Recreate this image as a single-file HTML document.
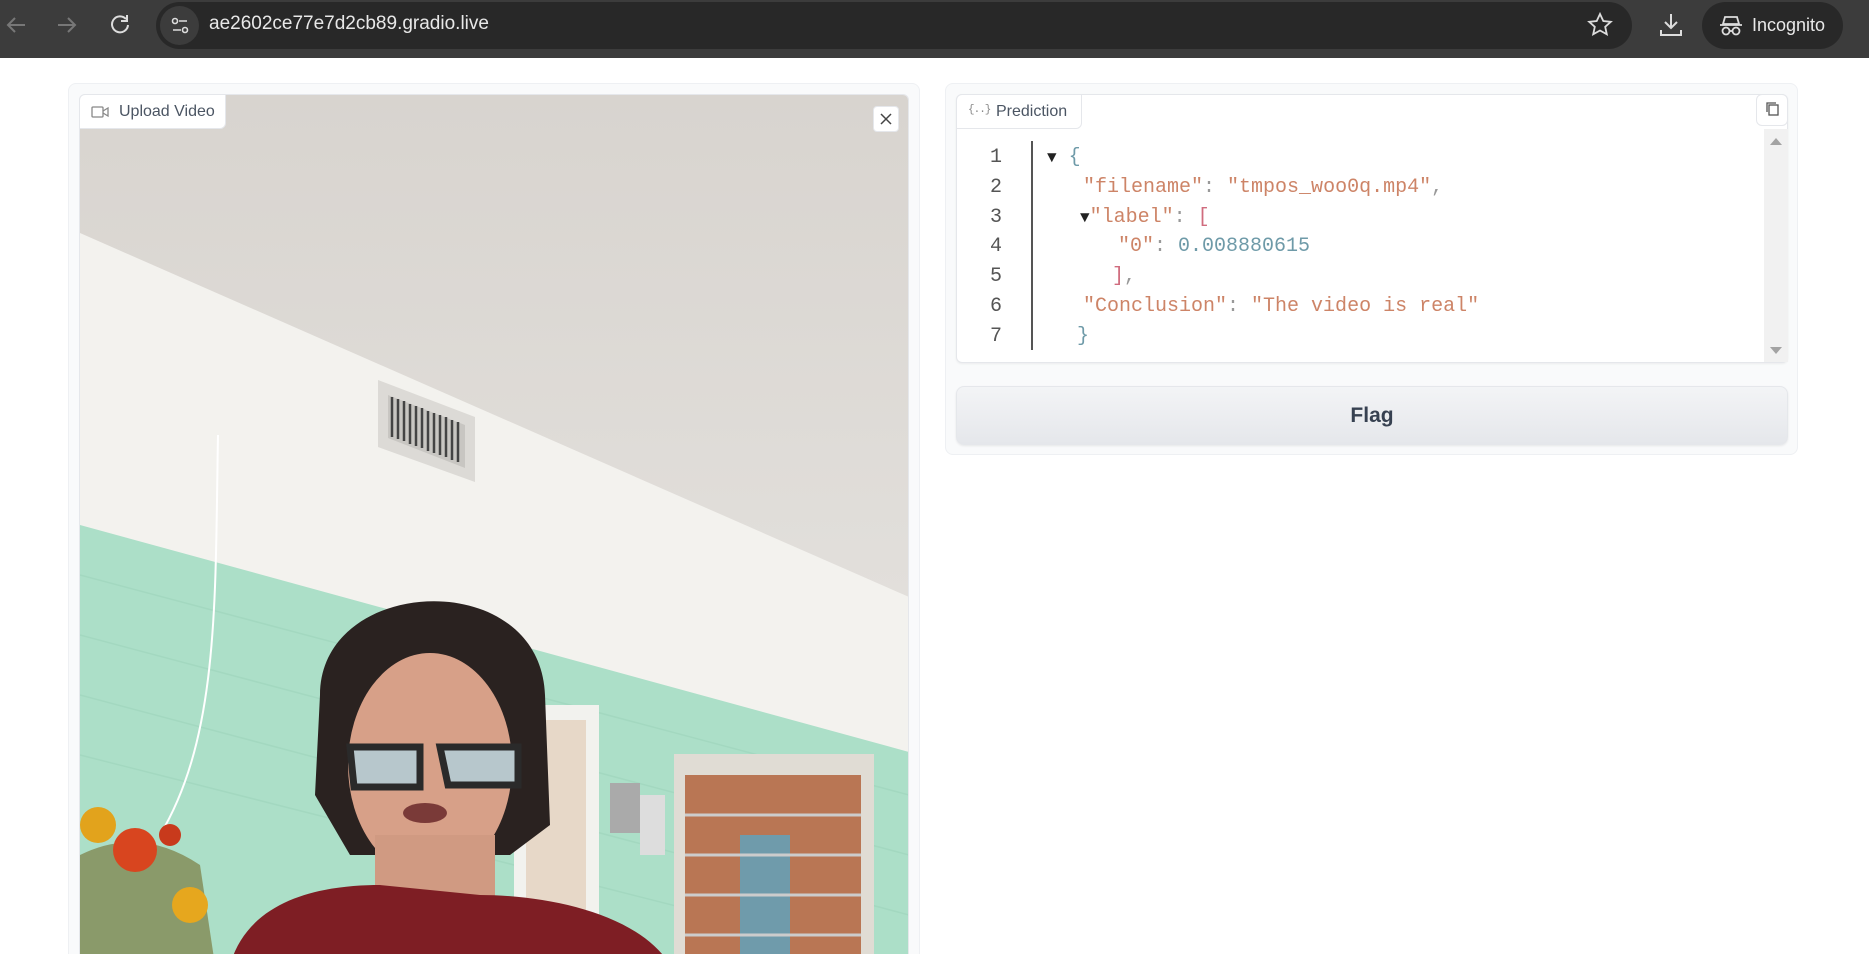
<!DOCTYPE html>
<html style="overflow:hidden;height:954px"><head><meta charset="utf-8"><style>
*{box-sizing:border-box;margin:0;padding:0}
body{width:1869px;height:954px;overflow:hidden;background:#fff;font-family:"Liberation Sans",sans-serif;position:relative}
.bar{position:absolute;left:0;top:0;width:1869px;height:58px;background:#3c3c3c}
.omni{position:absolute;left:156px;top:2px;width:1476px;height:47px;border-radius:24px;background:#282828}
.url{position:absolute;left:209px;top:13px;color:#e8e8e8;font-size:19px}
.incog{position:absolute;left:1702px;top:2px;width:141px;height:47px;border-radius:24px;background:#282828;color:#e8e8e8;font-size:18px;line-height:47px;padding-left:50px}
.panel{position:absolute;background:#f9fafb;border:1px solid #eef0f3;border-radius:8px}
.mono{font-family:"Liberation Mono",monospace;font-size:20px;position:absolute;white-space:pre}
.ln{color:#555;left:990px}
.s{color:#cd8467}.n{color:#6e9aa8}.p{color:#999}.b{color:#d06c7e}
</style></head><body>
<div class="bar">
 <svg width="140" height="58" style="position:absolute;left:0;top:0" fill="none" stroke-width="2">
  <path d="M25 25H8M15 18l-7 7 7 7" stroke="#777"/>
  <path d="M58 25h17M68 18l7 7-7 7" stroke="#777"/>
  <path d="M126 19a8 8 0 1 0 2 6M127 15v6h-6" stroke="#ddd"/>
 </svg>
 <div class="omni"><div style="position:absolute;left:4px;top:4px;width:39px;height:39px;border-radius:50%;background:#3c3c3c"></div>
 <svg width="20" height="20" style="position:absolute;left:14px;top:14px" stroke="#ddd" fill="none" stroke-width="1.6"><circle cx="5" cy="5" r="2.5"/><path d="M9 5h8M3 14h8"/><circle cx="15" cy="14" r="2.5"/></svg></div>
 <div class="url">ae2602ce77e7d2cb89.gradio.live</div>
 <svg width="30" height="30" style="position:absolute;left:1585px;top:10px" fill="none" stroke="#ddd" stroke-width="1.8"><path d="M15 4l3.3 7 7.5.8-5.6 5 1.6 7.5L15 20.5l-6.8 3.8 1.6-7.5-5.6-5 7.5-.8z"/></svg>
 <svg width="30" height="30" style="position:absolute;left:1656px;top:10px" fill="none" stroke="#ddd" stroke-width="2"><path d="M15 4v14M9 12l6 6 6-6M5 20v5h20v-5"/></svg>
 <div class="incog">Incognito</div>
 <svg width="26" height="24" style="position:absolute;left:1718px;top:14px" fill="none" stroke="#ddd" stroke-width="1.8"><path d="M7 3h12l2 7H5zM2 11h22"/><circle cx="8" cy="17" r="3.5"/><circle cx="18" cy="17" r="3.5"/><path d="M11.5 17h3"/></svg>
</div>

<div class="panel" style="left:68px;top:83px;width:852px;height:880px"></div>
<div style="position:absolute;left:79px;top:94px;width:830px;height:870px;overflow:hidden;border-radius:6px 6px 0 0;border:1px solid #e5e7eb">
<svg width="830" height="870" viewBox="0 0 830 870">
 <defs><linearGradient id="c" x1="0" y1="0" x2="0" y2="1"><stop offset="0" stop-color="#d8d4cf"/><stop offset="1" stop-color="#e9e7e4"/></linearGradient></defs>
 <rect width="830" height="870" fill="url(#c)"/>
 <polygon points="0,138 829,502 829,870 0,870" fill="#f3f2ee"/>
 <polygon points="0,430 829,657 829,870 0,870" fill="#acdfc8"/>
 <path d="M0 480L829 700M0 540L829 760M0 600L829 820M0 660L829 870" stroke="#a3d8c0" stroke-width="1.5"/>
 <polygon points="298,285 395,322 395,387 298,352" fill="#dcdad6"/>
 <polygon points="308,300 385,330 385,373 308,343" fill="#c8c6c2"/>
 <path d="M312 302v40M318 304v40M324 306v40M330 309v40M336 311v40M342 313v40M348 316v40M354 318v40M360 320v40M366 322v40M372 325v40M378 327v40" stroke="#444" stroke-width="2.5"/>
 <path d="M138 340 C135 500 140 640 80 740" stroke="#fff" stroke-width="2" fill="none"/>
 <rect x="434" y="610" width="85" height="260" fill="#f2f2ee"/>
 <rect x="446" y="625" width="60" height="245" fill="#e7d8c8"/>
 <rect x="594" y="659" width="200" height="211" fill="#e0dcd4"/>
 <rect x="605" y="680" width="176" height="190" fill="#b97654"/>
 <rect x="660" y="740" width="50" height="130" fill="#6f9bab"/>
 <path d="M605 720h176M605 760h176M605 800h176M605 840h176" stroke="#ccc" stroke-width="3"/>
 <rect x="530" y="688" width="30" height="50" fill="#aaa"/><rect x="560" y="700" width="25" height="60" fill="#ddd"/>
 <path d="M0 760 Q60 730 120 770 L135 870 L0 870Z" fill="#8a9a6a"/>
 <circle cx="18" cy="730" r="18" fill="#e2a31c"/><circle cx="55" cy="755" r="22" fill="#d8451f"/><circle cx="110" cy="810" r="18" fill="#e6a71e"/><circle cx="90" cy="740" r="11" fill="#c83a1c"/>
 <path d="M240 600 C240 480 460 470 465 600 L470 730 L430 760 L270 760 L235 700Z" fill="#2a2220"/>
 <ellipse cx="350" cy="670" rx="82" ry="112" fill="#d7a088"/>
 <rect x="295" y="740" width="120" height="90" fill="#d09a82"/>
 <path d="M270 652 h70 v40 h-66z M360 652 h78 v38 h-70z" fill="#b7c7cc" stroke="#2a2a2a" stroke-width="7"/>
 <ellipse cx="345" cy="718" rx="22" ry="10" fill="#7a3a38"/>
 <path d="M150 870 C170 800 250 790 300 790 L400 800 C470 800 560 820 590 870Z" fill="#7e1e24"/>
</svg></div>
<div style="position:absolute;left:79px;top:94px;width:147px;height:35px;background:#fff;border-radius:6px 0 6px 0;border:1px solid #e5e7eb;color:#4b5563;font-size:16px;line-height:33px;padding-left:39px">Upload Video</div>
<svg width="18" height="14" style="position:absolute;left:91px;top:105px" fill="none" stroke="#888" stroke-width="1.3"><rect x="1" y="2" width="11" height="10" rx="1"/><path d="M12 6l5-3v8l-5-3"/></svg>
<div style="position:absolute;left:873px;top:106px;width:26px;height:26px;background:#fff;border-radius:4px;border:1px solid #e5e7eb"></div>
<svg width="14" height="14" style="position:absolute;left:879px;top:112px" stroke="#444" stroke-width="1.5"><path d="M2 2l10 10M12 2L2 12"/></svg>

<div class="panel" style="left:945px;top:83px;width:853px;height:372px"></div>
<div style="position:absolute;left:956px;top:94px;width:832px;height:269px;background:#fff;border:1px solid #e5e7eb;border-radius:6px;box-shadow:0 1px 2px rgba(0,0,0,.06)"></div>
<div style="position:absolute;left:956px;top:94px;width:126px;height:35px;background:#fff;border-radius:6px 0 6px 0;border:1px solid #e5e7eb;color:#4b5563;font-size:16px;line-height:33px;padding-left:39px">Prediction</div>
<div style="position:absolute;left:968px;top:104px;font-size:11px;color:#888;font-family:'Liberation Mono',monospace;letter-spacing:-1px">{..}</div>
<div style="position:absolute;left:1756px;top:94px;width:32px;height:32px;background:#fff;border:1px solid #e5e7eb;border-radius:6px"></div>
<svg width="16" height="16" style="position:absolute;left:1765px;top:101px" fill="none" stroke="#555" stroke-width="1.3"><rect x="4" y="4" width="9" height="10"/><path d="M2 11V2h9"/></svg>
<div style="position:absolute;left:1764px;top:129px;width:24px;height:233px;background:#f1f1f1"></div>
<svg width="14" height="220" style="position:absolute;left:1769px;top:135px" fill="#a3a3a3"><path d="M1 10L7 3l6 7z M1 212l6 7 6-7z"/></svg>
<div style="position:absolute;left:1031px;top:141px;width:2px;height:209px;background:#555"></div>
<div class="mono ln" style="top:146px">1</div>
<div class="mono ln" style="top:176px">2</div>
<div class="mono ln" style="top:206px">3</div>
<div class="mono ln" style="top:235px">4</div>
<div class="mono ln" style="top:265px">5</div>
<div class="mono ln" style="top:295px">6</div>
<div class="mono ln" style="top:325px">7</div>
<div class="mono" style="top:146px;left:1047px;color:#222"><span style="font-size:16px">▼</span> <span class="n">{</span></div>
<div class="mono" style="top:176px;left:1083px"><span class="s">"filename"</span><span class="p">: </span><span class="s">"tmpos_woo0q.mp4"</span><span class="p">,</span></div>
<div class="mono" style="top:206px;left:1080px"><span style="font-size:16px;color:#222">▼</span><span class="s">"label"</span><span class="p">: </span><span class="b">[</span></div>
<div class="mono" style="top:235px;left:1118px"><span class="s">"0"</span><span class="p">: </span><span class="n">0.008880615</span></div>
<div class="mono" style="top:265px;left:1112px"><span class="b">]</span><span class="p">,</span></div>
<div class="mono" style="top:295px;left:1083px"><span class="s">"Conclusion"</span><span class="p">: </span><span class="s">"The video is real"</span></div>
<div class="mono" style="top:325px;left:1077px"><span class="n">}</span></div>

<div style="position:absolute;left:956px;top:386px;width:832px;height:59px;border-radius:8px;background:linear-gradient(#f3f4f6,#e5e7eb);border:1px solid #e5e7eb;box-shadow:0 1px 2px rgba(0,0,0,.08);text-align:center;line-height:57px;font-size:21px;font-weight:bold;color:#374151">Flag</div>
</body></html>
